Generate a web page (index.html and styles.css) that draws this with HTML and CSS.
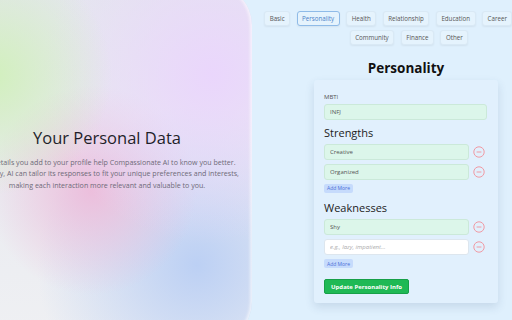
FILE: index.html
```html
<!DOCTYPE html>
<html lang="en">
<head>
    <meta charset="UTF-8">
    <meta name="viewport" content="width=device-width, initial-scale=1.0">
    <title>Profile - Personality</title>
    <link rel="stylesheet" href="styles.css">
</head>
<body>
    <div class="page">
        <div class="intro">
            <h1>Your Personal Data</h1>
            <p>The details you add to your profile help Compassionate AI to know you better.<br>
            This way, AI can tailor its responses to fit your unique preferences and interests,<br>
            making each interaction more relevant and valuable to you.</p>
        </div>

        <div class="profile">
            <div class="tabs">
                <button class="tab">Basic</button>
                <button class="tab active">Personality</button>
                <button class="tab">Health</button>
                <button class="tab">Relationship</button>
                <button class="tab">Education</button>
                <button class="tab">Career</button>
                <button class="tab">Hobbies</button>
                <button class="tab">Community</button>
                <button class="tab">Finance</button>
                <button class="tab">Other</button>
            </div>

            <h2>Personality</h2>

            <form class="card">
                <label class="field-label" for="mbti">MBTI</label>
                <input class="input filled full" id="mbti" type="text" value="INFJ">

                <h3>Strengths</h3>
                <div class="row">
                    <input class="input filled" type="text" value="Creative">
                    <button type="button" class="remove"><svg viewBox="0 0 12 12"><circle cx="6" cy="6" r="5.2"/><path d="M3.6 6h4.8"/></svg></button>
                </div>
                <div class="row">
                    <input class="input filled" type="text" value="Organized">
                    <button type="button" class="remove"><svg viewBox="0 0 12 12"><circle cx="6" cy="6" r="5.2"/><path d="M3.6 6h4.8"/></svg></button>
                </div>
                <button type="button" class="add">Add More</button>

                <h3>Weaknesses</h3>
                <div class="row">
                    <input class="input filled" type="text" value="Shy">
                    <button type="button" class="remove"><svg viewBox="0 0 12 12"><circle cx="6" cy="6" r="5.2"/><path d="M3.6 6h4.8"/></svg></button>
                </div>
                <div class="row">
                    <input class="input" type="text" placeholder="e.g., lazy, impatient...">
                    <button type="button" class="remove"><svg viewBox="0 0 12 12"><circle cx="6" cy="6" r="5.2"/><path d="M3.6 6h4.8"/></svg></button>
                </div>
                <button type="button" class="add">Add More</button>

                <button type="button" class="save">Update Personality Info</button>
            </form>
        </div>
    </div>
</body>
</html>
```

FILE: styles.css
```css
* {
    margin: 0;
    padding: 0;
    box-sizing: border-box;
    font-family: 'Open Sans', 'Noto Sans', sans-serif;
}
html, body {
    height: 100%;
    overflow: hidden;
}
body {
    background: #dff0fd;
    color: #333;
}
.page {
    display: flex;
    height: 320px;
}
.intro {
    flex: 0 0 290px;
    margin-left: -38px;
    margin-top: -15px;
    height: 357px;
    border-radius: 0 40px 40px 0;
    display: flex;
    flex-direction: column;
    justify-content: center;
    align-items: center;
    padding-bottom: 10px;
    background:
        radial-gradient(circle at 30px 90px, rgba(208, 240, 186, 0.95) 0, rgba(208, 240, 186, 0) 120px),
        radial-gradient(circle at 250px 90px, rgba(234, 214, 252, 1) 0, rgba(234, 214, 252, 0) 170px),
        radial-gradient(circle at 130px 205px, rgba(236, 190, 220, 1) 0, rgba(236, 190, 220, 0) 105px),
        radial-gradient(circle at 235px 280px, rgba(188, 208, 244, 1) 0, rgba(188, 208, 244, 0) 160px),
        linear-gradient(180deg, #e4e6ee, #eff0f3);
    box-shadow: inset -2px 0 3px rgba(255, 255, 255, 0.6);
}
.intro h1 {
    font-size: 16.5px;
    font-weight: 400;
    color: #1f1f2a;
    margin-bottom: 8px;
}
.intro p {
    font-size: 7.1px;
    line-height: 11.5px;
    color: #6e6a78;
    text-align: center;
    white-space: nowrap;
}
.profile {
    flex: 0 0 288px;
    margin-left: 10px;
    display: flex;
    flex-direction: column;
    align-items: center;
}
.tabs {
    align-self: stretch;
    margin-right: -6px;
    margin-top: 11px;
    display: flex;
    flex-wrap: wrap;
    justify-content: center;
    gap: 4px 6.5px;
}
.tab {
    height: 15px;
    padding: 0 4.5px;
    font-size: 6.2px;
    color: #555;
    background: #e5f3fd;
    border: 1px solid #d9e9f5;
    border-radius: 3px;
    box-shadow: 0 1px 2px rgba(0, 0, 0, 0.06);
}
.tab.active {
    color: #4a82c9;
    border-color: #8fbbe8;
}
h2 {
    margin-top: 14px;
    font-size: 13.5px;
    font-weight: 700;
    color: #111;
}
.card {
    width: 184px;
    margin-top: 3px;
    padding: 13px 11px 9px 10px;
    background: #e1f0fd;
    border-radius: 3px;
    box-shadow: 0 4px 10px rgba(40, 70, 110, 0.14);
    display: flex;
    flex-direction: column;
    align-items: flex-start;
}
.field-label {
    font-size: 6px;
    color: #555;
    line-height: 8px;
    margin-bottom: 3px;
}
.input {
    width: 145px;
    height: 16px;
    padding: 0 5px;
    font-size: 6px;
    color: #555;
    background: #fff;
    border: 1px solid #dde6ee;
    border-radius: 3px;
    outline: none;
}
.input::placeholder {
    color: #aaa;
    font-style: italic;
}
.input.filled {
    background: #dcf6ea;
    border-color: #cbe9d9;
}
.input.full {
    width: 100%;
}
h3 {
    font-size: 11px;
    font-weight: 400;
    color: #222;
    margin-top: 4.5px;
    margin-bottom: 3px;
    line-height: 16px;
}
.row {
    display: flex;
    align-items: center;
    gap: 4px;
    margin-bottom: 4px;
}
.remove {
    width: 12px;
    height: 12px;
    border: none;
    background: none;
    display: flex;
}
.remove svg {
    width: 12px;
    height: 12px;
    fill: none;
    stroke: #f09aa4;
    stroke-width: 1;
}
.add {
    height: 9px;
    padding: 0 3px;
    font-size: 5px;
    color: #4a6fd8;
    background: #c6dbfc;
    border: none;
    border-radius: 2px;
    margin-bottom: 3px;
}
.save {
    margin-top: 8px;
    height: 15px;
    padding: 0 6px;
    font-size: 6px;
    font-weight: 700;
    color: #fff;
    background: #1fb955;
    border: 1px solid #17a048;
    border-radius: 2px;
}
```
